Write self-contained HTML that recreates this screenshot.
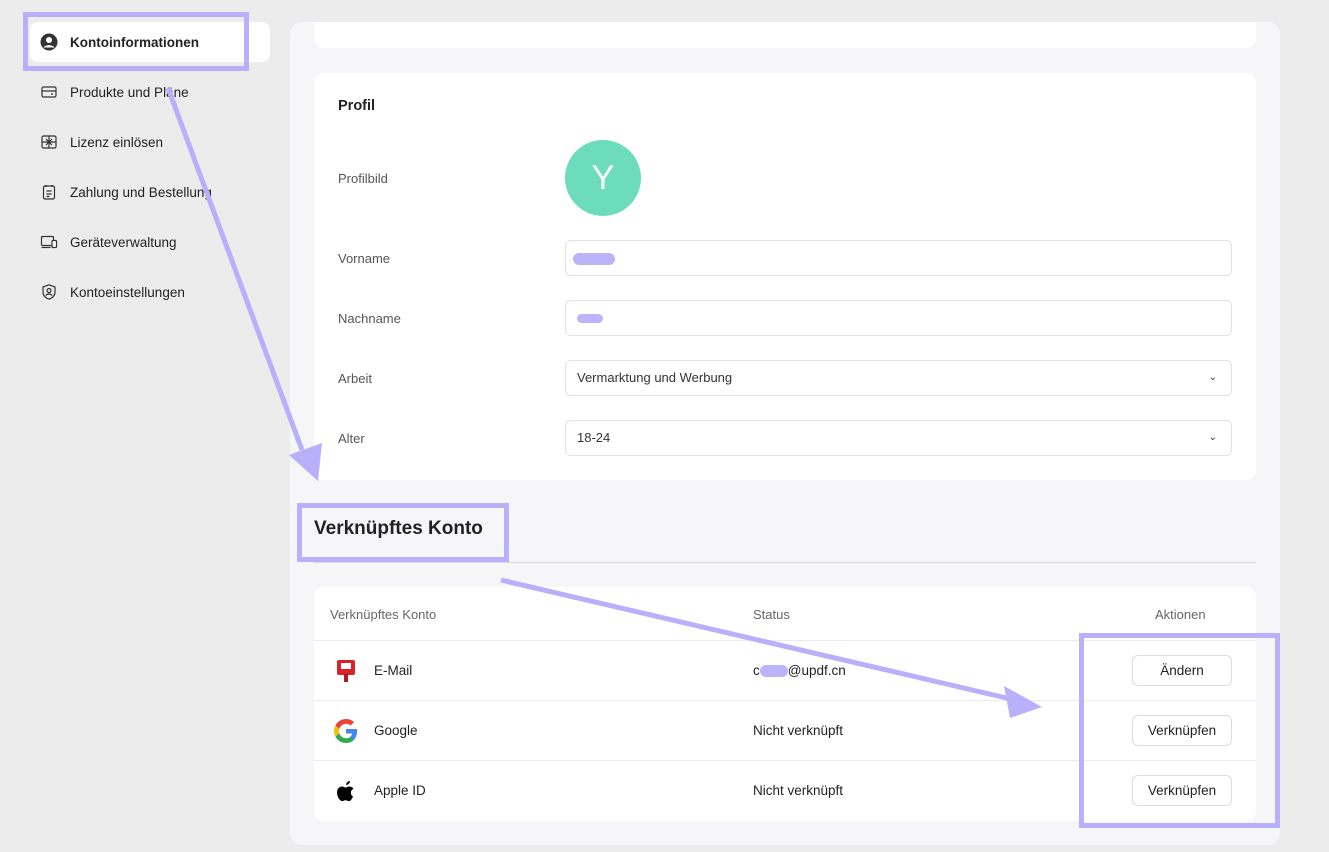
<!DOCTYPE html>
<html><head><meta charset="utf-8"><style>
*{box-sizing:border-box;margin:0;padding:0}
body{width:1329px;height:852px;background:#ececed;font-family:"Liberation Sans",sans-serif;position:relative;overflow:hidden;color:#1a1a1a}
.abs{position:absolute}
.nav{position:absolute;left:30px;font-size:13.5px;color:#222;display:flex;align-items:center}
.nav svg{width:18px;height:18px;margin-right:12px;margin-left:10px}
.panel{left:290px;top:22px;width:990px;height:823px;background:#f6f6f8;border-radius:12px}
.card{background:#fff;border-radius:10px;position:absolute}
.lbl{position:absolute;left:338px;font-size:13px;color:#555}
.inp{position:absolute;left:565px;width:667px;height:36px;border:1px solid #e2e2e6;border-radius:6px;background:#fff;font-size:13px;color:#333;padding-left:11px;line-height:34px}
.btn{position:absolute;left:1132px;width:100px;height:31px;border:1px solid #dcdce0;border-radius:6px;background:#fff;font-size:13.5px;text-align:center;line-height:29px;color:#222}
.row{position:absolute;left:314px;width:942px;border-top:1px solid #ececee}
.t{position:absolute;font-size:13.5px;color:#222}
</style></head><body>
<div class="abs" style="left:30px;top:22px;width:240px;height:40px;background:#fff;border-radius:8px"></div>
<div class="nav" style="top:33px;font-weight:bold"><svg viewBox="0 0 18 18"><circle cx="9" cy="9" r="8.5" fill="#333"/><circle cx="9" cy="7" r="3" fill="#fff"/><path d="M3.5 14.5c1.5-3 9.5-3 11 0" fill="#fff"/></svg>Kontoinformationen</div>
<div class="nav" style="top:83px"><svg viewBox="0 0 18 18" fill="none" stroke="#333" stroke-width="1.2"><rect x="2" y="4" width="14" height="10" rx="1.5"/><path d="M2 8h14M11 11h2"/></svg>Produkte und Pläne</div>
<div class="nav" style="top:133px"><svg viewBox="0 0 18 18" fill="none" stroke="#333" stroke-width="1.2"><rect x="2" y="3" width="14" height="12" rx="1.5"/><path d="M2 9h14M9 3v12M6 6l3 3 3-3M6 12l3-3 3 3"/></svg>Lizenz einlösen</div>
<div class="nav" style="top:183px"><svg viewBox="0 0 18 18" fill="none" stroke="#333" stroke-width="1.2"><rect x="3.5" y="3" width="11" height="13" rx="1.5"/><path d="M6 2v2M12 2v2M6.5 8h5M6.5 11h5M6.5 13.5h3"/></svg>Zahlung und Bestellung</div>
<div class="nav" style="top:233px"><svg viewBox="0 0 18 18" fill="none" stroke="#333" stroke-width="1.2"><rect x="1.5" y="3.5" width="12" height="9" rx="1"/><path d="M1.5 14.5h9"/><rect x="12" y="7.5" width="4.5" height="7" rx="1" fill="#fff"/></svg>Geräteverwaltung</div>
<div class="nav" style="top:283px"><svg viewBox="0 0 18 18" fill="none" stroke="#333" stroke-width="1.2"><path d="M9 1.8l6 2.2v5c0 3.6-2.6 6-6 7.2C5.6 15 3 12.6 3 9V4z"/><circle cx="9" cy="7.5" r="2"/><path d="M5.8 12.5c1.5-2 4.9-2 6.4 0"/></svg>Kontoeinstellungen</div>

<div class="abs panel"></div>
<div class="card" style="left:314px;top:22px;width:942px;height:26px;border-radius:0 0 10px 10px"></div>
<div class="card" style="left:314px;top:73px;width:942px;height:407px"></div>
<div class="t" style="left:338px;top:98px;font-weight:bold;font-size:14.5px">Profil</div>
<div class="lbl" style="top:171px">Profilbild</div>
<div class="abs" style="left:565px;top:140px;width:76px;height:76px;border-radius:50%;background:#6cdcbd;color:#fff;font-size:34px;text-align:center;line-height:76px">Y</div>
<div class="lbl" style="top:251px">Vorname</div>
<div class="inp" style="top:240px"><span style="display:inline-block;width:42px;height:12px;background:#bdb3fb;border-radius:6px;vertical-align:middle;margin-left:-4px"></span></div>
<div class="lbl" style="top:311px">Nachname</div>
<div class="inp" style="top:300px"><span style="display:inline-block;width:26px;height:9px;background:#bdb3fb;border-radius:5px;vertical-align:middle"></span></div>
<div class="lbl" style="top:371px">Arbeit</div>
<div class="inp" style="top:360px">Vermarktung und Werbung<span style="position:absolute;right:14px;font-size:10px">&#8964;</span></div>
<div class="lbl" style="top:431px">Alter</div>
<div class="inp" style="top:420px">18-24<span style="position:absolute;right:14px;font-size:10px">&#8964;</span></div>

<div class="t" style="left:314px;top:518px;font-size:19px;font-weight:bold">Verknüpftes Konto</div>
<div class="abs" style="left:314px;top:562px;width:942px;height:1px;background:#d8d8dc"></div>
<div class="card" style="left:314px;top:587px;width:942px;height:234px"></div>
<div class="t" style="left:330px;top:607px;color:#666;font-size:13px">Verknüpftes Konto</div>
<div class="t" style="left:753px;top:607px;color:#666;font-size:13px">Status</div>
<div class="t" style="left:1155px;top:607px;color:#666;font-size:13px">Aktionen</div>
<div class="row" style="top:640px"></div><div class="row" style="top:700px"></div><div class="row" style="top:760px"></div>
<svg class="abs" style="left:335px;top:659px" width="22" height="24" viewBox="0 0 22 24"><rect x="2" y="1" width="18" height="15" rx="2" fill="#d8232a"/><rect x="6" y="4" width="10" height="6" fill="#fff"/><rect x="9" y="15" width="4" height="8" fill="#b01a20"/></svg>
<div class="t" style="left:374px;top:663px">E-Mail</div>
<svg class="abs" style="left:334px;top:719px" width="24" height="24" viewBox="0 0 48 48"><path fill="#EA4335" d="M24 9.5c3.5 0 6.7 1.2 9.2 3.6l6.9-6.9C35.9 2.4 30.5 0 24 0 14.6 0 6.6 5.4 2.7 13.3l8 6.2C12.6 13.6 17.9 9.5 24 9.5z"/><path fill="#4285F4" d="M46.1 24.5c0-1.6-.1-3.1-.4-4.5H24v9h12.4c-.5 2.9-2.2 5.4-4.7 7.1l7.7 6c4.5-4.2 6.7-10.3 6.7-17.6z"/><path fill="#FBBC05" d="M10.5 28.6c-.5-1.4-.8-3-.8-4.6s.3-3.2.8-4.6l-8-6.2C1 16.5 0 20.1 0 24s1 7.5 2.7 10.7l7.8-6.1z"/><path fill="#34A853" d="M24 48c6.5 0 11.9-2.1 15.900-5.8l-7.7-6c-2.2 1.5-5 2.3-8.2 2.3-6.1 0-11.4-4.1-13.3-9.8l-8 6.2C6.6 42.6 14.6 48 24 48z"/></svg>
<div class="t" style="left:374px;top:723px">Google</div>
<svg class="abs" style="left:335px;top:779px" width="22" height="24" viewBox="0 0 22 24"><path d="M15 2c0 2-1.6 4-3.8 4C11 4 12.7 2.2 15 2zM18 17.5c-.9 2.2-2.3 4.6-4 4.6-1.5 0-1.8-.9-3.5-.9s-2.1.9-3.5.9c-1.8 0-5-4-5-8.6 0-4 2.6-6 5-6 1.5 0 2.6 1 3.5 1s2.2-1 3.8-1c1.1 0 3 .4 4.1 2.1-1.6 1-2.5 2.4-2.5 4.2 0 2 1.2 3.3 2.1 3.7z" fill="#000"/></svg>
<div class="t" style="left:374px;top:783px">Apple ID</div>
<div class="t" style="left:753px;top:663px">c<span style="display:inline-block;width:28px;height:12px;background:#bdb3fb;border-radius:6px;vertical-align:middle"></span>@updf.cn</div>
<div class="t" style="left:753px;top:723px">Nicht verknüpft</div>
<div class="t" style="left:753px;top:783px">Nicht verknüpft</div>
<div class="btn" style="top:655px">Ändern</div>
<div class="btn" style="top:715px">Verknüpfen</div>
<div class="btn" style="top:775px">Verknüpfen</div>

<svg class="abs" style="left:0;top:0" width="1329" height="852">
<g fill="none" stroke="#b9affb" stroke-width="5">
<rect x="25.5" y="14.5" width="221" height="54"/>
<rect x="299.5" y="505.5" width="207" height="54"/>
<rect x="1081.5" y="635.5" width="196" height="190"/>
<path d="M168 88L302 450"/>
<path d="M501 580L1015 700"/>
</g>
<g fill="#b9affb"><path d="M289 455L322 443L318 481z"/><path d="M1042 707L1004 686L1010 718z"/></g>
</svg>
</body></html>
